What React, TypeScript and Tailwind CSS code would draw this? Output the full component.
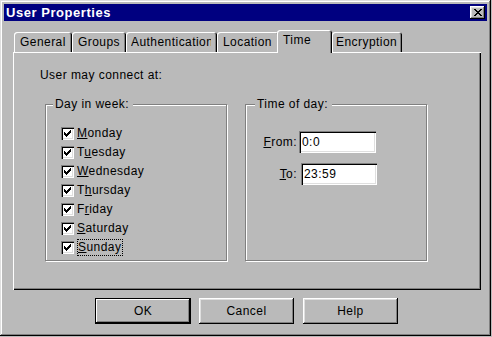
import React from 'react';

const days = [
  { pre: '', key: 'M', post: 'onday' },
  { pre: 'T', key: 'u', post: 'esday' },
  { pre: '', key: 'W', post: 'ednesday' },
  { pre: 'T', key: 'h', post: 'ursday' },
  { pre: 'F', key: 'r', post: 'iday' },
  { pre: '', key: 'S', post: 'aturday' },
  { pre: '', key: 'S', post: 'unday' },
];

const tabs = [
  { label: 'General', w: 'w-[58px]', pl: 'pl-[6px]' },
  { label: 'Groups', w: 'w-[54px]', pl: 'pl-[6px]' },
  { label: 'Authentication', w: 'w-[91px]', pl: 'pl-[5px]' },
  { label: 'Location', w: 'w-[62px]', pl: 'pl-[6px]' },
];

const CheckMark = () => (
  <svg width="7" height="7" viewBox="0 0 7 7" shapeRendering="crispEdges" className="ml-[3px] mt-[3px]">
    <path
      fill="#000"
      d="M6 0h1v1H6z M5 1h2v1H5z M0 2h1v1H0z M4 2h3v1H4z M0 3h2v1H0z M3 3h3v1H3z M0 4h5v1H0z M1 5h3v1H1z M2 6h1v1H2z"
    />
  </svg>
);

const Checkbox = () => (
  <div className="w-[13px] h-[13px] bg-white shadow-[inset_1px_1px_0_#808080,inset_2px_2px_0_#000,inset_-1px_-1px_0_#fff,inset_-2px_-2px_0_#dfdfdf] flex items-start">
    <CheckMark />
  </div>
);

const GroupBox: React.FC<{ label: string; labelLeft: string; children: React.ReactNode }> = ({ label, labelLeft, children }) => (
  <div className="relative w-[182px] h-[157px] border border-[#808080] shadow-[inset_1px_1px_0_#fff,1px_1px_0_#fff]">
    <div className={`absolute top-[-8px] ${labelLeft} pl-[2px] pr-[4px] bg-[#bababa] leading-[15px] whitespace-nowrap`}>
      {label}
    </div>
    {children}
  </div>
);

const Button: React.FC<{ label: string; isDefault?: boolean; w: string; ml: string }> = ({ label, isDefault, w, ml }) => (
  <button
    className={`${w} ${ml} h-[26px] bg-[#bababa] flex items-center justify-center leading-[15px] ${
      isDefault
        ? 'border border-black shadow-[inset_-1px_-1px_0_#000,inset_1px_1px_0_#fff,inset_-2px_-2px_0_#808080]'
        : 'shadow-[inset_-1px_-1px_0_#000,inset_1px_1px_0_#fff,inset_-2px_-2px_0_#808080,inset_2px_2px_0_#dfdfdf]'
    }`}
  >
    {label}
  </button>
);

export default function App() {
  return (
    <div className="w-[492px] h-[337px] bg-[#bababa] font-['Liberation_Sans',Arial,sans-serif] text-[12px] tracking-[0.45px] text-black">
      <div className="w-[491px] h-[336px] p-[4px] shadow-[inset_-1px_-1px_0_#000,inset_1px_1px_0_#dfdfdf,inset_-2px_-2px_0_#808080,inset_2px_2px_0_#fff] flex flex-col">
        {/* Title bar */}
        <div className="h-[17px] bg-[#000080] flex items-center justify-between pl-[2px] pr-[2px]">
          <span className="text-white font-bold text-[13px] tracking-[0.55px] leading-[15px]">User Properties</span>
          <button className="w-[15px] h-[13px] bg-[#bababa] flex items-center justify-center shadow-[inset_-1px_-1px_0_#000,inset_1px_1px_0_#fff,inset_-2px_-2px_0_#808080,inset_2px_2px_0_#dfdfdf]">
            <svg width="8" height="7" viewBox="0 0 8 7" shapeRendering="crispEdges">
              <path
                fill="#000"
                d="M0 0h2v1H0z M6 0h2v1H6z M1 1h2v1H1z M5 1h2v1H5z M2 2h4v1H2z M3 3h2v1H3z M2 4h4v1H2z M1 5h2v1H1z M5 5h2v1H5z M0 6h2v1H0z M6 6h2v1H6z"
              />
            </svg>
          </button>
        </div>

        {/* Tabs */}
        <div className="mt-[9px] ml-[10px] h-[22px] flex items-end">
          {tabs.map((t) => (
            <div
              key={t.label}
              className={`${t.w} ${t.pl} h-[20px] flex items-center rounded-t-[3px] shadow-[inset_1px_1px_0_#fff,inset_-1px_0_0_#000,inset_-2px_0_0_#808080] leading-[15px] whitespace-nowrap overflow-hidden`}
            >
              <span className="block max-w-[80px] overflow-hidden">{t.label}</span>
            </div>
          ))}
          <div className="relative z-10 -ml-[2px] w-[55px] h-[23px] -mb-[1px] pl-[6px] pb-[3px] flex items-center bg-[#bababa] rounded-t-[3px] shadow-[inset_1px_1px_0_#fff,inset_-1px_0_0_#000,inset_-2px_0_0_#808080] leading-[15px]">
            Time
          </div>
          <div className="w-[70px] h-[20px] pl-[4px] flex items-center rounded-t-[3px] shadow-[inset_1px_1px_0_#fff,inset_-1px_0_0_#000,inset_-2px_0_0_#808080] leading-[15px]">
            Encryption
          </div>
        </div>

        {/* Panel */}
        <div className="ml-[9px] w-[468px] h-[238px] shadow-[inset_1px_1px_0_#fff,inset_-1px_-1px_0_#000,inset_-2px_-2px_0_#808080] flex flex-col">
          <div className="pt-[16px] pl-[27px] leading-[15px]">User may connect at:</div>

          <div className="mt-[21px] pl-[32px] flex gap-[18px]">
            <GroupBox label="Day in week:" labelLeft="left-[7px]">
              <div className="pt-[19px] pl-[15px] flex flex-col">
                {days.map((d, i) => (
                  <div key={i} className="h-[19px] flex items-center">
                    <Checkbox />
                    {i === days.length - 1 ? (
                      <span className="ml-[3px] border border-dotted border-black leading-[15px] pr-[1px]">
                        {d.pre}
                        <span className="underline">{d.key}</span>
                        {d.post}
                      </span>
                    ) : (
                      <span className="ml-[3px] leading-[15px]">
                        {d.pre}
                        <span className="underline">{d.key}</span>
                        {d.post}
                      </span>
                    )}
                  </div>
                ))}
              </div>
            </GroupBox>

            <GroupBox label="Time of day:" labelLeft="left-[9px]">
              <div className="pt-[26px] flex flex-col">
                <div className="flex items-center">
                  <span className="w-[51px] text-right leading-[15px]">
                    <span className="underline">F</span>rom:
                  </span>
                  <input
                    readOnly
                    value="0:0"
                    className="ml-[2px] w-[77px] h-[22px] pl-[3px] bg-white outline-none leading-[15px] shadow-[inset_1px_1px_0_#808080,inset_2px_2px_0_#000,inset_-1px_-1px_0_#fff,inset_-2px_-2px_0_#dfdfdf]"
                  />
                </div>
                <div className="mt-[10px] flex items-center">
                  <span className="w-[51px] text-right leading-[15px]">
                    <span className="underline">T</span>o:
                  </span>
                  <input
                    readOnly
                    value="23:59"
                    className="ml-[4px] w-[76px] h-[22px] pl-[3px] bg-white outline-none leading-[15px] shadow-[inset_1px_1px_0_#808080,inset_2px_2px_0_#000,inset_-1px_-1px_0_#fff,inset_-2px_-2px_0_#dfdfdf]"
                  />
                </div>
              </div>
            </GroupBox>
          </div>
        </div>

        {/* Buttons */}
        <div className="mt-[8px] ml-[91px] flex">
          <Button label="OK" isDefault w="w-[96px]" ml="ml-0" />
          <Button label="Cancel" w="w-[95px]" ml="ml-[8px]" />
          <Button label="Help" w="w-[95px]" ml="ml-[9px]" />
        </div>
      </div>
    </div>
  );
}
